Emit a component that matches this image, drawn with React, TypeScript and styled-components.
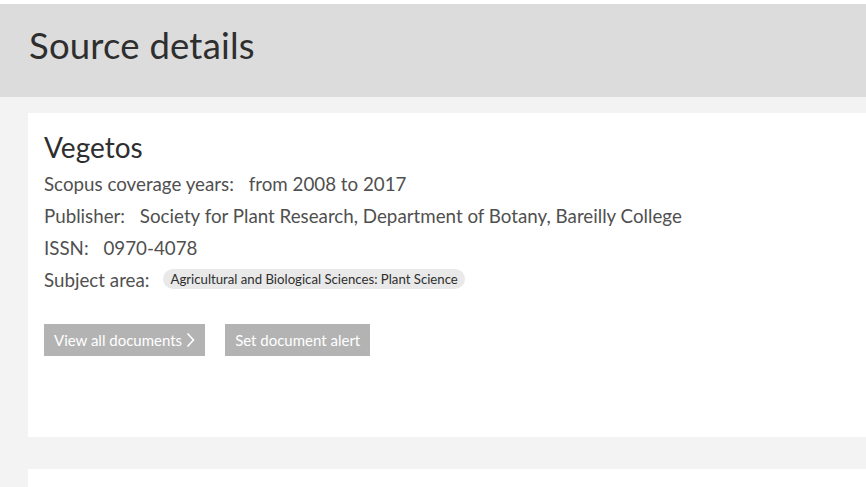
import React from "react";
import styled, { createGlobalStyle } from "styled-components";

const Global = createGlobalStyle`
  html, body { margin: 0; padding: 0; background: #ffffff; overflow: hidden; }
  body { font-family: Lato, "Open Sans", "Liberation Sans", sans-serif; }
`;

const Page = styled.div`
  padding-top: 4px;
  width: 866px;
  height: 483px;
  overflow: hidden;
`;

const Header = styled.header`
  background: #dcdcdc;
  height: 93px;
  display: flex;
  align-items: center;
  padding-left: 29px;
`;

const Title = styled.h1`
  margin: 0 0 12px 0;
  font-size: 36.5px;
  font-weight: 400;
  color: #2e2e2e;
  letter-spacing: 0.2px;
`;

const Main = styled.main`
  background: #f3f3f3;
  padding: 16px 0 0 28px;
  display: flex;
  flex-direction: column;
  gap: 32px;
`;

const Card = styled.section<{ $h: number }>`
  background: #ffffff;
  height: ${(p) => p.$h}px;
  padding: 16px 0 0 16px;
  box-sizing: border-box;
`;

const Name = styled.h2`
  margin: 0 0 2px 0;
  font-size: 28px;
  font-weight: 400;
  color: #2e2e2e;
  line-height: 36px;
`;

const Row = styled.div`
  display: flex;
  align-items: center;
  height: 32px;
  font-size: 18.75px;
  color: #505050;
  gap: 10px;
`;

const Chip = styled.span`
  background: #e9e9e9;
  border-radius: 10px;
  font-size: 13.2px;
  color: #2e2e2e;
  padding: 2px 7px;
  line-height: 16px;
  margin-left: 4px;
`;

const Actions = styled.div`
  display: flex;
  gap: 20px;
  margin-top: 29px;
`;

const Btn = styled.button`
  background: #b3b3b3;
  border: none;
  color: #ffffff;
  font-family: inherit;
  font-size: 15px;
  height: 32px;
  padding: 0 10px;
  display: flex;
  align-items: center;
  gap: 4px;
`;

const Peek = styled.div`
  display: flex;
  gap: 70px;
  padding: 13px 0 0 221px;
`;

const Tick = styled.span`
  width: 2px;
  height: 5px;
  background: #e0893c;
  opacity: 0.85;
`;

export default function App() {
  return (
    <>
      <Global />
      <Page>
        <Header>
          <Title>Source details</Title>
        </Header>
        <Main>
          <Card $h={324}>
            <Name>Vegetos</Name>
            <Row>
              <span>Scopus coverage years:</span>
              <span>&nbsp;from 2008 to 2017</span>
            </Row>
            <Row>
              <span>Publisher:</span>
              <span>&nbsp;Society for Plant Research, Department of Botany, Bareilly College</span>
            </Row>
            <Row>
              <span>ISSN:</span>
              <span>&nbsp;0970-4078</span>
            </Row>
            <Row>
              <span>Subject area:</span>
              <Chip>Agricultural and Biological Sciences: Plant Science</Chip>
            </Row>
            <Actions>
              <Btn>
                View all documents
                <svg width="9" height="16" viewBox="0 0 9 16">
                  <path d="M1.5 1.5 L7.5 8 L1.5 14.5" stroke="#fff" strokeWidth="1.6" fill="none" />
                </svg>
              </Btn>
              <Btn>Set document alert</Btn>
            </Actions>
          </Card>
          <Card $h={40}>
            <Peek>
              <Tick />
              <Tick />
            </Peek>
          </Card>
        </Main>
      </Page>
    </>
  );
}
